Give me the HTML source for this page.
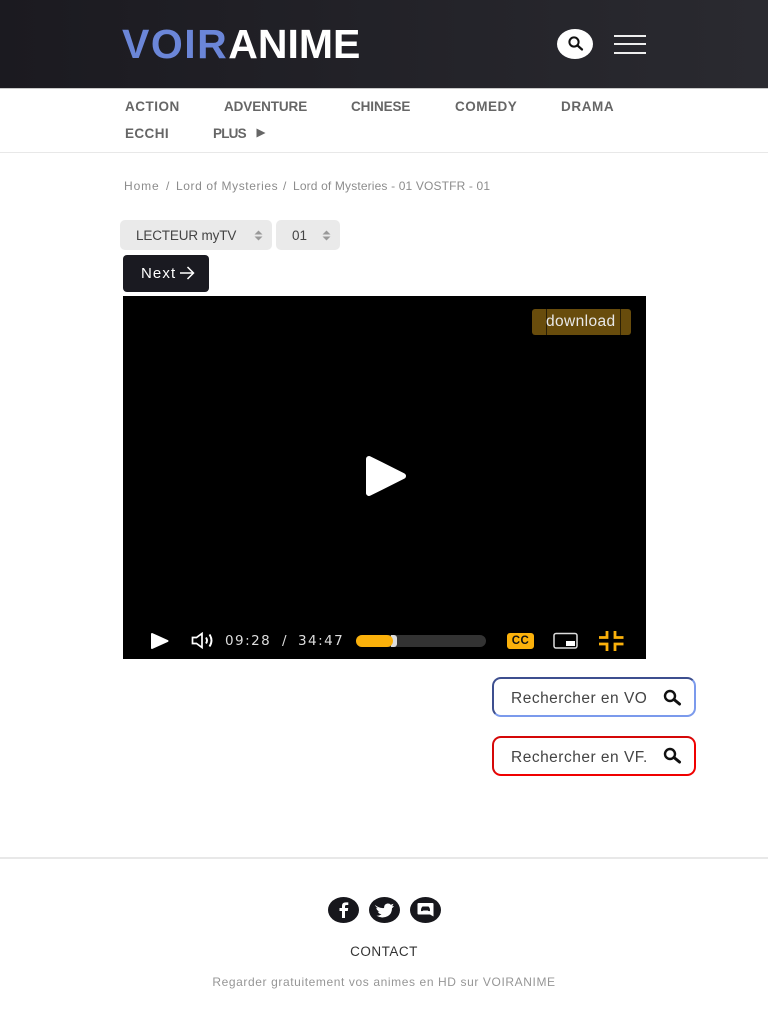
<!DOCTYPE html>
<html lang="fr"><head><meta charset="utf-8"><title>VOIRANIME</title>
<style>
html,body{margin:0;padding:0;background:#fff}
body{width:768px;height:1024px;overflow:hidden;position:relative;font-family:"Liberation Sans",sans-serif}
.a{position:absolute;white-space:nowrap}
header{position:absolute;left:0;top:0;width:768px;height:88px;background:linear-gradient(90deg,#1b1a20,#2a2a30);border-bottom:1px solid #c9c9c9;box-sizing:content-box}
.nav{font-weight:700;font-size:13.5px;color:#666;line-height:16px}
.bc{font-size:12px;color:#8c8c8c;line-height:14px}
.sel{position:absolute;background:#eaeaea;border-radius:5px;height:30px}
.rs{position:absolute;left:492px;width:204px;height:40px;box-sizing:border-box;border-radius:9px;background:#fff}
svg{position:absolute;display:block}
</style></head><body>
<header></header>
<div class="a" style="left:122px;top:21px;font-size:41px;font-weight:700;line-height:46px;letter-spacing:1.5px;color:#6b86d8">VOIR<span style="color:#fff;letter-spacing:0">ANIME</span></div>
<div class="a" style="left:557px;top:29px;width:36px;height:30px;border-radius:50%;background:#fff"></div>
<svg style="left:566px;top:35px" width="18" height="17" viewBox="0 0 18 17"><circle cx="8" cy="7" r="4.6" fill="none" stroke="#111" stroke-width="2"/><path d="M11.5 10.500L16 14.500" stroke="#111" stroke-width="2.200" stroke-linecap="round"/></svg>
<div class="a" style="left:614px;top:35px;width:32px;height:1.5px;background:#eee"></div>
<div class="a" style="left:614px;top:43px;width:32px;height:1.5px;background:#eee"></div>
<div class="a" style="left:614px;top:52px;width:32px;height:1.5px;background:#eee"></div>

<div class="a nav" style="left:125px;top:99px;letter-spacing:.5px">ACTION</div>
<div class="a nav" style="left:224px;top:99px;letter-spacing:-.1px">ADVENTURE</div>
<div class="a nav" style="left:351px;top:99px;letter-spacing:-.1px">CHINESE</div>
<div class="a nav" style="left:455px;top:99px;letter-spacing:.5px">COMEDY</div>
<div class="a nav" style="left:561px;top:99px;letter-spacing:.6px">DRAMA</div>
<div class="a nav" style="left:125px;top:126px;letter-spacing:.4px">ECCHI</div>
<div class="a nav" style="left:213px;top:126px;letter-spacing:-.8px">PLUS</div>
<svg style="left:256px;top:128px" width="10" height="10" viewBox="0 0 10 10"><path d="M0.500 .5L9.500 5L0.500 9.500Z" fill="#666"/></svg>
<div class="a" style="left:0;top:152px;width:768px;height:1px;background:#e8e8e8"></div>

<div class="a bc" style="left:124px;top:179px;letter-spacing:.9px">Home</div>
<div class="a bc" style="left:166px;top:179px">/</div>
<div class="a bc" style="left:176px;top:179px;letter-spacing:.6px">Lord of Mysteries</div>
<div class="a bc" style="left:283px;top:179px">/</div>
<div class="a bc" style="left:293px;top:179px;letter-spacing:.15px">Lord of Mysteries - 01 VOSTFR - 01</div>

<div class="sel" style="left:120px;top:220px;width:152px"></div>
<div class="sel" style="left:276px;top:220px;width:64px"></div>
<div class="a" style="left:136px;top:228px;font-size:13.5px;line-height:16px;color:#444;letter-spacing:-.15px">LECTEUR myTV</div>
<div class="a" style="left:292px;top:228px;font-size:13.5px;line-height:16px;color:#444">01</div>
<svg style="left:254px;top:230px" width="9" height="11" viewBox="0 0 9 11"><path d="M4.500 0.500L8.500 4.500H0.500ZM4.500 10.500L0.500 6.500H8.500Z" fill="#999"/></svg>
<svg style="left:322px;top:230px" width="9" height="11" viewBox="0 0 9 11"><path d="M4.500 0.500L8.500 4.500H0.500ZM4.500 10.500L0.500 6.500H8.500Z" fill="#999"/></svg>

<div class="a" style="left:123px;top:255px;width:86px;height:37px;background:#1a1a21;border-radius:4px"></div>
<div class="a" style="left:141px;top:265px;font-size:15px;line-height:18px;color:#fff;letter-spacing:1.1px">Next</div>
<svg style="left:179px;top:265px" width="16" height="16" viewBox="0 0 16 16"><path d="M1 8H14.500M8.500 2L14.500 8L8.500 14" fill="none" stroke="#fff" stroke-width="1.500"/></svg>

<div class="a" style="left:123px;top:296px;width:523px;height:363px;background:#000"></div>
<div class="a" style="left:532px;top:309px;width:99px;height:26px;background:#684c0c;border-radius:3px"></div>
<div class="a" style="left:546px;top:309px;width:1px;height:26px;background:#2a1f05"></div>
<div class="a" style="left:620px;top:309px;width:1px;height:26px;background:#2a1f05"></div>
<div class="a" style="left:546px;top:312px;font-size:15.5px;line-height:19px;color:#e8e8e8;letter-spacing:.4px">download</div>
<svg style="left:363px;top:453px" width="46" height="46" viewBox="0 0 46 46"><path d="M6 6L40 23L6 40Z" fill="#fff" stroke="#fff" stroke-width="6" stroke-linejoin="round"/></svg>

<svg style="left:150px;top:632px" width="19" height="18" viewBox="0 0 19 18"><path d="M2 2L17.500 9L2 16Z" fill="#fff" stroke="#fff" stroke-width="2" stroke-linejoin="round"/></svg>
<svg style="left:191px;top:632px" width="25" height="17" viewBox="0 0 25 17"><path d="M1.500 5.500H5.500L11 1.500V15.500L5.500 11.500H1.500Z" fill="none" stroke="#fff" stroke-width="1.700"/><path d="M15 5.500Q17 8.500 15 11.500M18.500 2.500Q22.500 8.500 18.500 14.500" fill="none" stroke="#fff" stroke-width="1.900"/></svg>
<div class="a" style="left:225px;top:633px;font-family:'DejaVu Sans',sans-serif;font-size:13.5px;line-height:17px;color:#ddd;letter-spacing:1.45px">09:28</div>
<div class="a" style="left:282px;top:633px;font-family:'DejaVu Sans',sans-serif;font-size:13.5px;line-height:17px;color:#ddd">/</div>
<div class="a" style="left:298px;top:633px;font-family:'DejaVu Sans',sans-serif;font-size:13.5px;line-height:17px;color:#ddd;letter-spacing:1.45px">34:47</div>
<div class="a" style="left:356px;top:635px;width:130px;height:12px;border-radius:6px;background:#333"></div>
<div class="a" style="left:391px;top:635px;width:6px;height:12px;border-radius:0 3px 3px 0;background:#ddd"></div>
<div class="a" style="left:356px;top:635px;width:37px;height:12px;border-radius:6px;background:#fbb10b"></div>
<div class="a" style="left:507px;top:633px;width:27px;height:16px;border-radius:3px;background:#fbb10b;color:#111;font-weight:700;font-size:11.5px;line-height:16px;text-align:center;letter-spacing:.4px">CC</div>
<svg style="left:553px;top:632px" width="26" height="18" viewBox="0 0 26 18"><rect x="1" y="1.500" width="23" height="14.500" rx="2" fill="none" stroke="#ddd" stroke-width="1.500"/><rect x="13" y="9" width="9" height="5" fill="#fff"/></svg>
<svg style="left:598px;top:630px" width="27" height="22" viewBox="0 0 27 22"><path d="M9 1V7.500H1M17 1V7.500H25.500M9 21V14H1M17 21V14H25.500" fill="none" stroke="#fbb10b" stroke-width="2.800"/></svg>

<div class="rs" style="top:677px;border:2px solid;border-color:#3d4f8f #7b9aec #7b9aec #3d4f8f"></div>
<div class="a" style="left:511px;top:690px;font-size:15.5px;line-height:18px;color:#444;width:137px;overflow:hidden;letter-spacing:.5px">Rechercher en VO</div>
<svg style="left:662px;top:689px" width="20" height="18" viewBox="0 0 20 18"><circle cx="8" cy="7" r="5" fill="none" stroke="#111" stroke-width="2.400"/><path d="M12 10.500L17.500 15" stroke="#111" stroke-width="3" stroke-linecap="round"/></svg>
<div class="rs" style="top:736px;border:2px solid;border-color:#d50808 #f00000 #f00000 #d50808"></div>
<div class="a" style="left:511px;top:749px;font-size:15.5px;line-height:18px;color:#444;letter-spacing:.5px">Rechercher en VF.</div>
<svg style="left:662px;top:747px" width="20" height="18" viewBox="0 0 20 18"><circle cx="8" cy="7" r="5" fill="none" stroke="#111" stroke-width="2.400"/><path d="M12 10.500L17.500 15" stroke="#111" stroke-width="3" stroke-linecap="round"/></svg>

<div class="a" style="left:0;top:857px;width:768px;height:2px;background:#e8e8e8"></div>
<svg style="left:328px;top:897px" width="113" height="26" viewBox="0 0 113 26">
<ellipse cx="15.500" cy="13" rx="15.500" ry="13" fill="#17171c"/><ellipse cx="56.500" cy="13" rx="15.500" ry="13" fill="#17171c"/><ellipse cx="97.500" cy="13" rx="15.500" ry="13" fill="#17171c"/>
<path d="M17 21V14H19.800L20.200 11H17V9.300Q17 8 18.400 8H20.300V5.400H17.800Q14 5.400 14 9V11H11.500V14H14V21Z" fill="#fff"/>
<path d="M47 8Q51.500 11.500 56 11Q56 7 59.500 6.500Q61.500 6.300 62.800 7.700L65.500 6.800L64.200 9.300L66 9Q65 10.500 64 11.200Q64 16.500 60 19Q54.500 22 48.500 18.800Q51.500 18.900 53.500 17.300Q50.800 17 49.800 14.600H51.500Q48.500 13.500 48.300 10.800L50 11.200Q47.300 9.500 47 8Z" fill="#fff"/>
<path d="M90.500 6H104.500Q105.500 6 105.500 7V19.500L102 17.500H90.500Q89.500 17.500 89.500 16.500V7Q89.500 6 90.500 6Z" fill="#fff"/>
<path d="M93 14Q92.800 11 94.500 9.500H100.500Q102.200 11 102 14Q100.500 14.500 99.800 13.500H95.200Q94.500 14.500 93 14Z" fill="#17171c"/>
</svg>
<div class="a" style="left:0;top:943px;width:768px;text-align:center;font-size:13.5px;line-height:17px;color:#333;letter-spacing:.5px">CONTACT</div>
<div class="a" style="left:0;top:975px;width:768px;text-align:center;font-size:12px;line-height:14px;color:#969696;letter-spacing:.6px">Regarder gratuitement vos animes en HD sur VOIRANIME</div>
</body></html>
